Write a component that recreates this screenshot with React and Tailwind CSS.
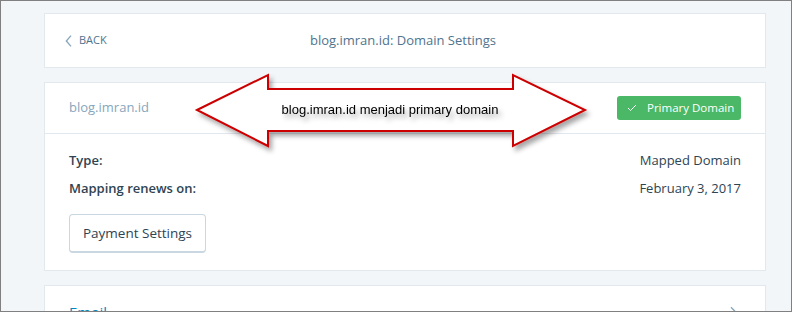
import React from "react";

function ChevronLeft({ className }) {
  return (
    <svg viewBox="0 0 24 24" className={className} fill="none" stroke="currentColor" strokeWidth="2">
      <polyline points="15,4 8,12 15,20" />
    </svg>
  );
}

function Check({ className }) {
  return (
    <svg viewBox="0 0 24 24" className={className} fill="none" stroke="currentColor" strokeWidth="2">
      <polyline points="4,12 9,17 20,6" />
    </svg>
  );
}

// red double arrow callout drawn over the page
function Callout() {
  return (
    <svg className="absolute inset-0 pointer-events-none" width="792" height="312" viewBox="0 0 792 312">
      <defs>
        <filter id="sh" x="-10%" y="-30%" width="130%" height="180%">
          <feDropShadow dx="3" dy="4" stdDeviation="2.5" floodColor="#000" floodOpacity="0.35" />
        </filter>
      </defs>
      <polygon
        points="196,109 267,74 267,88 512,88 512,74 584,109 512,145 512,130 267,130 267,145"
        fill="#fff"
        stroke="#cc0000"
        strokeWidth="2"
        strokeLinejoin="miter"
        filter="url(#sh)"
      />
      <text
        x="389"
        y="113"
        textAnchor="middle"
        fontSize="13"
        fill="#000"
        style={{ fontFamily: "'Liberation Sans', Arial, sans-serif" }}
        filter="url(#sh)"
      >
        blog.imran.id menjadi primary domain
      </text>
    </svg>
  );
}

export default function App() {
  return (
    <div className="relative w-[792px] h-[312px] overflow-hidden border border-[#808080] bg-[#f3f6f8] font-['Open_Sans',sans-serif] text-[#2e4453]">
      <div className="pl-[43px] pt-[12px]">
        {/* Header cake */}
        <div className="w-[722px] h-[55px] bg-white border border-[#e1e8ee] grid grid-cols-[1fr_auto_1fr] items-center pl-[16px] pr-5">
          <div className="flex items-center gap-[2px] text-[#4f748e]">
            <ChevronLeft className="w-[16px] h-[16px] text-[#87a6bc]" />
            <span className="text-[11px] uppercase">Back</span>
          </div>
          <div className="text-[13px] text-[#4f748e]">blog.imran.id: Domain Settings</div>
          <div />
        </div>

        {/* Domain card */}
        <div className="w-[722px] mt-[14px] bg-white border border-[#e1e8ee]">
          <div className="h-[51px] border-b border-[#e1e8ee] flex items-center justify-between px-6">
            <span className="text-[13px] text-[#87a6bc]">blog.imran.id</span>
            <span className="h-[24px] w-[124px] rounded-[3px] bg-[#4ab866] text-white text-[11.5px] whitespace-nowrap flex items-center pl-[9px] gap-[9px]">
              <Check className="w-[12px] h-[12px] shrink-0" />
              Primary Domain
            </span>
          </div>
          <div className="px-6 pt-4 pb-[17px] text-[13px]">
            <div className="flex justify-between leading-[20px]">
              <span className="font-semibold">Type:</span>
              <span>Mapped Domain</span>
            </div>
            <div className="flex justify-between leading-[20px] mt-2">
              <span className="font-semibold">Mapping renews on:</span>
              <span>February 3, 2017</span>
            </div>
            <button className="mt-4 h-[39px] w-[137px] rounded-[4px] border border-[#c8d7e1] border-b-2 bg-white text-[13.5px] text-[#2e4453]">
              Payment Settings
            </button>
          </div>
        </div>

        {/* Email card */}
        <div className="w-[722px] mt-[14px] h-[60px] bg-white border border-[#e1e8ee] flex items-start justify-between px-6 pt-[15px]">
          <span className="text-[15px] text-[#0087be]">Email</span>
          <svg viewBox="0 0 24 24" className="w-[16px] h-[16px] mt-[3px] text-[#87a6bc]" fill="none" stroke="currentColor" strokeWidth="2">
            <polyline points="9,5 16,12 9,19" />
          </svg>
        </div>
      </div>
      <Callout />
    </div>
  );
}
